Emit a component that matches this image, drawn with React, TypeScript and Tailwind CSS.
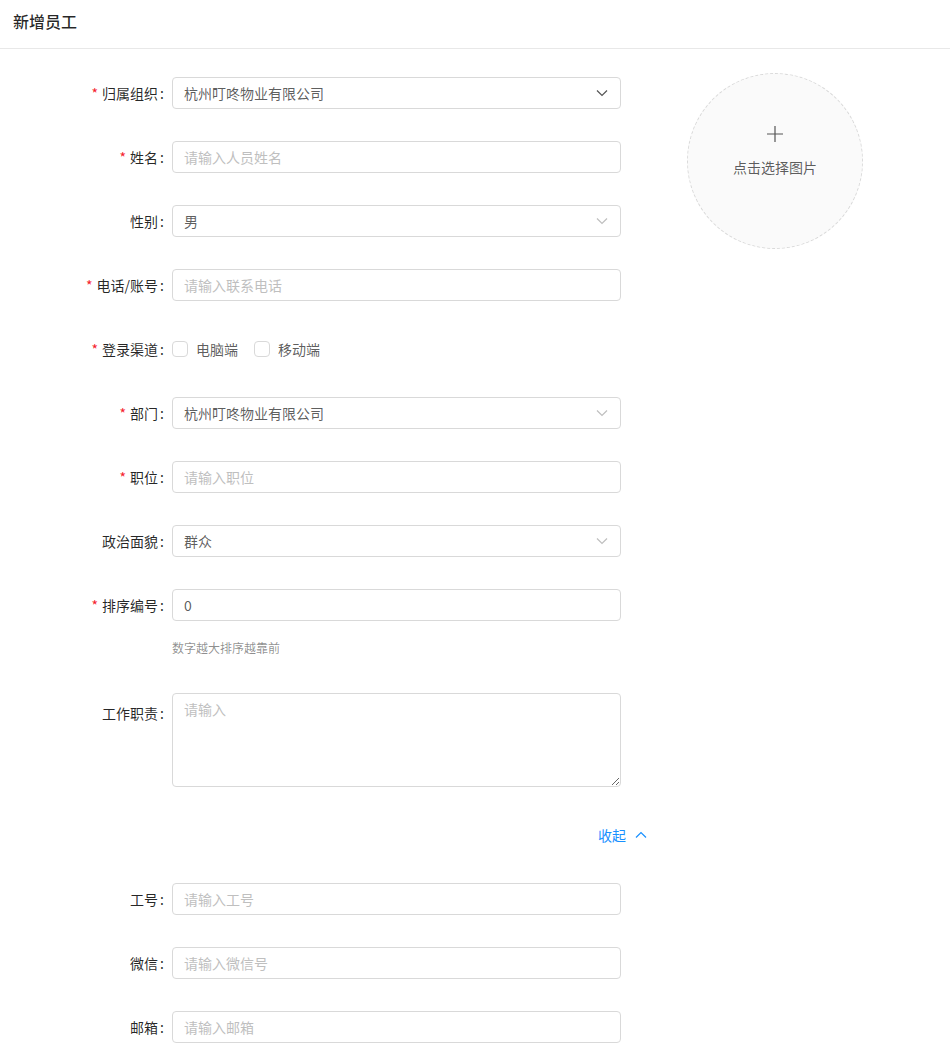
import { ReactNode } from 'react';

const font = { fontFamily: '"Noto Sans CJK SC", "Noto Sans", sans-serif' };

function Label({ text, required, className = '' }: { text: string; required?: boolean; className?: string }) {
  return (
    <div className={`w-[172px] shrink-0 h-8 flex items-center justify-end text-sm text-black/85 ${className}`}>
      {required && <span className="text-[#f5222d] mr-1 text-sm">*</span>}
      <span>{text}</span>
      <span className="ml-[2px] mr-[8px]">:</span>
    </div>
  );
}

function Row({ label, required, children, className = 'mb-8' }: { label: string; required?: boolean; children: ReactNode; className?: string }) {
  return (
    <div className={`flex items-start ${className}`}>
      <Label text={label} required={required} />
      <div className="w-[449px]">{children}</div>
    </div>
  );
}

function Input({ placeholder, value }: { placeholder?: string; value?: string }) {
  return (
    <input
      className="w-full h-8 px-[11px] border border-[#d9d9d9] rounded bg-white text-sm text-black/65 placeholder:text-[#bfbfbf] outline-none"
      placeholder={placeholder}
      defaultValue={value}
    />
  );
}

function Select({ value, dark }: { value: string; dark?: boolean }) {
  return (
    <div className="w-full h-8 px-[11px] border border-[#d9d9d9] rounded bg-white flex items-center justify-between text-sm text-black/65">
      <span>{value}</span>
      <svg width="12" height="12" viewBox="0 0 12 12" fill="none" className="mr-[1px]">
        <path d="M1 3.5 6 8.5 11 3.5" stroke={dark ? '#555' : '#bfbfbf'} strokeWidth="1.2" />
      </svg>
    </div>
  );
}

function Checkbox({ label }: { label: string }) {
  return (
    <label className="flex items-center mr-4">
      <span className="w-4 h-4 border border-[#d9d9d9] rounded-sm bg-white" />
      <span className="ml-2 text-sm text-black/65">{label}</span>
    </label>
  );
}

export default function App() {
  return (
    <div className="w-[950px] min-h-[1062px] bg-white" style={font}>
      <div className="h-[49px] border-b border-[#e8e8e8] px-[13px] pt-[10px]">
        <h1 className="text-base leading-[22px] font-medium text-black/85">新增员工</h1>
      </div>

      <div className="flex">
        <div className="w-[621px] shrink-0 pt-[28px]">
          <Row label="归属组织" required>
            <Select value="杭州叮咚物业有限公司" dark />
          </Row>
          <Row label="姓名" required>
            <Input placeholder="请输入人员姓名" />
          </Row>
          <Row label="性别">
            <Select value="男" />
          </Row>
          <Row label="电话/账号" required>
            <Input placeholder="请输入联系电话" />
          </Row>
          <Row label="登录渠道" required>
            <div className="h-8 flex items-center">
              <Checkbox label="电脑端" />
              <Checkbox label="移动端" />
            </div>
          </Row>
          <Row label="部门" required>
            <Select value="杭州叮咚物业有限公司" />
          </Row>
          <Row label="职位" required>
            <Input placeholder="请输入职位" />
          </Row>
          <Row label="政治面貌">
            <Select value="群众" />
          </Row>
          <Row label="排序编号" required className="mb-[35px]">
            <Input value="0" />
            <div className="mt-[17px] text-xs leading-5 text-black/45">数字越大排序越靠前</div>
          </Row>
          <div className="flex items-start">
            <Label text="工作职责" className="mt-1" />
            <textarea
              className="w-[449px] h-[94px] px-[11px] py-1 border border-[#d9d9d9] rounded bg-white text-sm leading-[22px] text-black/65 placeholder:text-[#bfbfbf] outline-none block"
              placeholder="请输入"
            />
          </div>
          <div className="h-[96px] w-max flex items-center pl-[598px] whitespace-nowrap">
            <span className="text-sm text-[#1890ff]">收起</span>
            <svg width="12" height="12" viewBox="0 0 12 12" fill="none" className="ml-[9px] shrink-0">
              <path d="M1 8.5 6 3.5 11 8.5" stroke="#1890ff" strokeWidth="1.2" />
            </svg>
          </div>
          <Row label="工号">
            <Input placeholder="请输入工号" />
          </Row>
          <Row label="微信">
            <Input placeholder="请输入微信号" />
          </Row>
          <Row label="邮箱" className="mb-4">
            <Input placeholder="请输入邮箱" />
          </Row>
        </div>

        <div className="pt-[24px] pl-[66px]">
          <div className="w-[176px] h-[176px] rounded-full border border-dashed border-[#d9d9d9] bg-[#fafafa] flex flex-col items-center pt-[51px]">
            <svg width="18" height="18" viewBox="0 0 18 18" fill="none" className="mb-[14px]">
              <path d="M9 1v16M1 9h16" stroke="#555" strokeWidth="1.2" />
            </svg>
            <span className="text-sm leading-5 text-black/65">点击选择图片</span>
          </div>
        </div>
      </div>
    </div>
  );
}
